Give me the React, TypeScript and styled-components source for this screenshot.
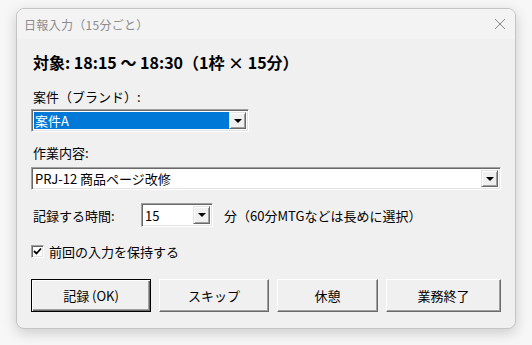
import React from "react";
import styled, { createGlobalStyle } from "styled-components";

const Global = createGlobalStyle`
  html, body { margin: 0; padding: 0; background: #f7f7f7; }
  body { font-family: "Noto Sans CJK JP", "Noto Sans", sans-serif; color: #000; }
  * { box-sizing: border-box; }
`;

const Stage = styled.div`
  width: 532px;
  height: 345px;
  padding: 8px 0 0 16px;
`;

const Window = styled.div`
  width: 500px;
  height: 321px;
  background: #f0f0f0;
  border: 1px solid #c4c4c4;
  border-radius: 8px;
  overflow: hidden;
  box-shadow: 0 4px 14px rgba(0, 0, 0, 0.18);
  display: flex;
  flex-direction: column;
`;

const TitleBar = styled.div`
  height: 30px;
  background: #f3f3f3;
  display: flex;
  align-items: center;
  justify-content: space-between;
  padding: 0 8px 0 7px;
  font-size: 12px;
  letter-spacing: 0.3px;
  color: #8c8c8c;
`;

const Close = styled.div`
  width: 14px;
  height: 14px;
  display: flex;
  align-items: center;
  justify-content: center;
`;

const Body = styled.div`
  flex: 1;
  display: flex;
  flex-direction: column;
  padding: 0 14px 0 14px;
`;

const Heading = styled.div`
  margin-top: 13px;
  height: 20px;
  line-height: 20px;
  font-size: 16px;
  font-weight: 700;
  padding-left: 2px;
`;

const Label = styled.div<{ $mt: number }>`
  margin-top: ${(p) => p.$mt}px;
  height: 18px;
  line-height: 18px;
  font-size: 13px;
  padding-left: 2px;
`;

const Combo = styled.div<{ $w: number; $mt?: number; $h?: number }>`
  margin-top: ${(p) => p.$mt ?? 0}px;
  width: ${(p) => p.$w}px;
  height: ${(p) => p.$h ?? 23}px;
  background: #fff;
  border: 1px solid;
  border-color: #a0a0a0 #ffffff #ffffff #a0a0a0;
  box-shadow: inset 1px 1px 0 #696969, inset -1px -1px 0 #e3e3e3;
  padding: 2px;
  display: flex;
  align-items: stretch;
`;

const ComboText = styled.div<{ $selected?: boolean }>`
  flex: 1;
  display: flex;
  align-items: center;
  padding-left: 1px;
  font-size: 13px;
  background: ${(p) => (p.$selected ? "#0078d7" : "transparent")};
  color: ${(p) => (p.$selected ? "#fff" : "#000")};
`;

const DropButton = styled.div`
  width: 17px;
  background: #f0f0f0;
  border: 1px solid;
  border-color: #e3e3e3 #696969 #696969 #e3e3e3;
  box-shadow: inset 1px 1px 0 #fff, inset -1px -1px 0 #a0a0a0;
  display: flex;
  align-items: center;
  justify-content: center;
`;

const Triangle = styled.div`
  width: 0;
  height: 0;
  border-left: 4px solid transparent;
  border-right: 4px solid transparent;
  border-top: 4px solid #000;
`;

const Row = styled.div<{ $mt: number }>`
  margin-top: ${(p) => p.$mt}px;
  display: flex;
  align-items: center;
`;

const RowLabel = styled.div`
  width: 110px;
  padding-left: 2px;
  font-size: 13px;
`;

const Note = styled.div`
  margin-left: 11px;
  font-size: 13px;
`;

const CheckRow = styled.div`
  margin-top: 15px;
  height: 18px;
  display: flex;
  align-items: center;
  font-size: 13px;
`;

const CheckBox = styled.div`
  width: 13px;
  height: 13px;
  background: #fff;
  border: 1px solid;
  border-color: #a0a0a0 #fff #fff #a0a0a0;
  box-shadow: inset 1px 1px 0 #696969, inset -1px -1px 0 #e3e3e3;
  display: flex;
  align-items: center;
  justify-content: center;
  margin-right: 5px;
`;

const Buttons = styled.div`
  margin-top: 19px;
  display: flex;
  gap: 8px;
`;

const Button = styled.div<{ $w: number; $default?: boolean }>`
  width: ${(p) => p.$w}px;
  height: 33px;
  background: #f0f0f0;
  font-size: 13px;
  display: flex;
  align-items: center;
  justify-content: center;
  border: 1px solid;
  border-color: ${(p) => (p.$default ? "#000" : "#fff #696969 #696969 #fff")};
  box-shadow: ${(p) =>
    p.$default
      ? "inset 1px 1px 0 #fff, inset -1px -1px 0 #696969, inset -2px -2px 0 #a0a0a0"
      : "inset -1px -1px 0 #a0a0a0"};
`;

export default function App() {
  return (
    <>
      <Global />
      <Stage>
        <Window>
          <TitleBar>
            <span>日報入力（15分ごと）</span>
            <Close>
              <svg width="12" height="12" viewBox="0 0 12 12">
                <path d="M1 1 L11 11 M11 1 L1 11" stroke="#8a8a8a" strokeWidth="1" />
              </svg>
            </Close>
          </TitleBar>
          <Body>
            <Heading>対象: 18:15 ～ 18:30（1枠 × 15分）</Heading>
            <Label $mt={16}>案件（ブランド）:</Label>
            <Combo $w={218} $mt={3}>
              <ComboText $selected>案件A</ComboText>
              <DropButton>
                <Triangle />
              </DropButton>
            </Combo>
            <Label $mt={12}>作業内容:</Label>
            <Combo $w={470} $mt={5}>
              <ComboText>PRJ-12 商品ページ改修</ComboText>
              <DropButton>
                <Triangle />
              </DropButton>
            </Combo>
            <Row $mt={13}>
              <RowLabel>記録する時間:</RowLabel>
              <Combo $w={72} $h={24}>
                <ComboText>15</ComboText>
                <DropButton>
                  <Triangle />
                </DropButton>
              </Combo>
              <Note>分（60分MTGなどは長めに選択）</Note>
            </Row>
            <CheckRow>
              <CheckBox>
                <svg width="9" height="9" viewBox="0 0 9 9">
                  <path d="M1 4 L3.5 6.5 L8 1.5" stroke="#000" strokeWidth="1.8" fill="none" />
                </svg>
              </CheckBox>
              前回の入力を保持する
            </CheckRow>
            <Buttons>
              <Button $w={120} $default>記録 (OK)</Button>
              <Button $w={110}>スキップ</Button>
              <Button $w={101}>休憩</Button>
              <Button $w={115}>業務終了</Button>
            </Buttons>
          </Body>
        </Window>
      </Stage>
    </>
  );
}
